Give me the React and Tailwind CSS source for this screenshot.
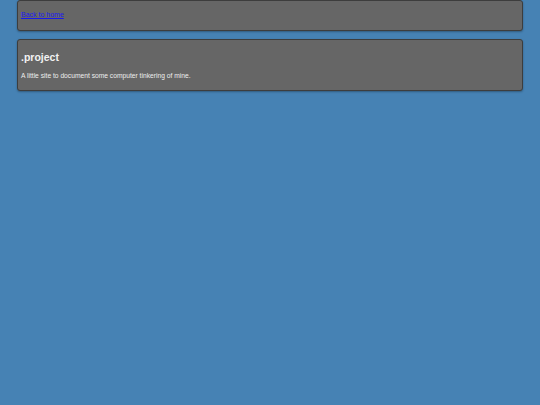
export default function App() {
  return (
    <div
      className="min-h-screen w-full bg-[#4682b4] px-[17px] flex flex-col gap-[8px]"
      style={{ fontFamily: '"Liberation Sans", Arial, sans-serif' }}
    >
      <div className="h-[31px] rounded-[3px] border border-[#3d3d3d] bg-[#666666] px-[3px] pt-[9px] leading-[9px] shadow-[0_1px_2px_rgba(0,0,0,0.3)]">
        <a href="#" className="block text-[7px] leading-[9px] text-[#1a1aee] underline">
          Back to home
        </a>
      </div>
      <div className="h-[52px] rounded-[3px] border border-[#3d3d3d] bg-[#666666] px-[3px] pt-[11px] shadow-[0_1px_2px_rgba(0,0,0,0.3)]">
        <h1 className="text-[10.5px] leading-[12px] font-bold text-[#f2f2f2]">.project</h1>
        <p className="mt-[9px] text-[6.7px] leading-[8px] text-[#eeeeee]">
          A little site to document some computer tinkering of mine.
        </p>
      </div>
    </div>
  );
}
